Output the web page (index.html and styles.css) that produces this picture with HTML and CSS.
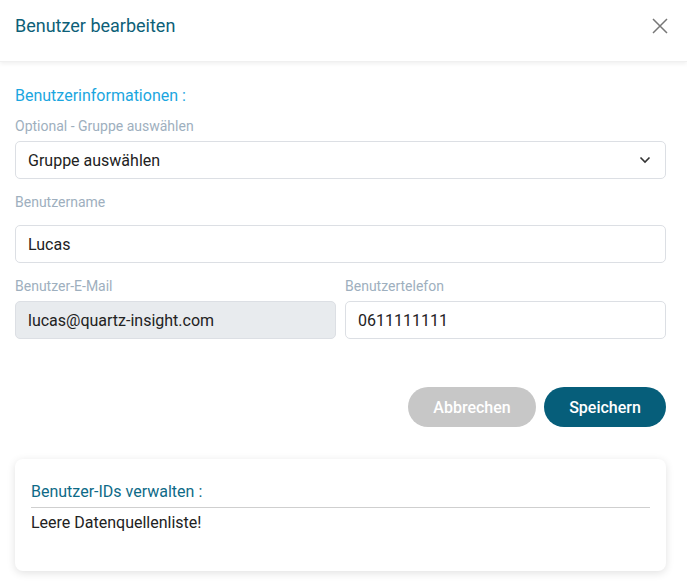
FILE: index.html
```html
<!DOCTYPE html>
<html lang="de">
<head>
<meta charset="utf-8">
<link rel="stylesheet" href="styles.css">
</head>
<body>
<div class="modal">
  <header class="modal-header">
    <h1 class="modal-title">Benutzer bearbeiten</h1>
    <button class="close" aria-label="Schließen">
      <svg width="16" height="16" viewBox="0 0 16 16"><path d="M1 1L15 15M15 1L1 15" stroke="#777" stroke-width="1.5" fill="none"/></svg>
    </button>
  </header>
  <section class="modal-body">
    <h2 class="section-title">Benutzerinformationen :</h2>
    <label class="label">Optional - Gruppe auswählen</label>
    <div class="field select">
      <span>Gruppe auswählen</span>
      <svg width="12" height="8" viewBox="0 0 12 8"><path d="M1.5 1.5L6 6L10.5 1.5" stroke="#333" stroke-width="1.6" fill="none"/></svg>
    </div>
    <label class="label label-wide">Benutzername</label>
    <div class="field">Lucas</div>
    <div class="row">
      <div class="col">
        <label class="label">Benutzer-E-Mail</label>
        <div class="field disabled">lucas@quartz-insight.com</div>
      </div>
      <div class="col">
        <label class="label">Benutzertelefon</label>
        <div class="field">0611111111</div>
      </div>
    </div>
    <div class="actions">
      <button class="btn btn-cancel">Abbrechen</button>
      <button class="btn btn-save">Speichern</button>
    </div>
    <div class="card">
      <h3 class="card-title">Benutzer-IDs verwalten :</h3>
      <p class="card-text">Leere Datenquellenliste!</p>
    </div>
  </section>
</div>
</body>
</html>
```
FILE: styles.css
```css
* { box-sizing: border-box; }
html, body { margin: 0; padding: 0; background: #fff; }
body { font-family: Roboto, "Noto Sans", Arial, sans-serif; color: #222; width: 687px; height: 588px; overflow: hidden; }
.modal { width: 687px; }
.modal-header {
  height: 62px;
  display: flex;
  align-items: center;
  justify-content: space-between;
  padding: 0 19px 10px 15px;
  box-shadow: 0 2px 4px rgba(0,0,0,0.06);
  border-bottom: 1px solid #f0f0f0;
}
.modal-title { margin: 0; font-size: 18px; font-weight: 400; color: #0d5f78; }
.close { background: none; border: 0; padding: 0; display: flex; cursor: pointer; }
.modal-body { padding: 24px 21px 0 15px; display: flex; flex-direction: column; }
.section-title { margin: 0 0 11px; font-size: 16px; font-weight: 400; color: #1ba6e0; line-height: 20px; }
.label { display: block; font-size: 14px; color: #9eafbe; line-height: 18px; margin-bottom: 6px; }
.label-wide { margin-bottom: 14px; }
.field {
  height: 38px;
  border: 1px solid #dcdfe4;
  border-radius: 5px;
  padding: 0 12px;
  display: flex;
  align-items: center;
  font-size: 16px;
  color: #222;
  margin-bottom: 14px;
}
.select { justify-content: space-between; padding-right: 14px; }
.disabled { background: #e8ebee; }
.row { display: flex; gap: 9px; }
.col { flex: 1; }
.actions { display: flex; justify-content: flex-end; gap: 8px; margin-top: 34px; }
.btn {
  height: 40px;
  border: 0;
  border-radius: 20px;
  font-family: inherit;
  font-size: 16px;
  font-weight: 500;
  color: #fff;
  padding: 0;
}
.btn-cancel { width: 128px; background: #c7c7c7; }
.btn-save { width: 122px; background: #065e7a; }
.card {
  margin-top: 32px;
  border-radius: 8px;
  box-shadow: 0 2px 8px rgba(0,0,0,0.12);
  padding: 23px 16px 38px;
}
.card-title {
  margin: 0;
  font-size: 16px;
  font-weight: 400;
  color: #0e6a87;
  padding-bottom: 5px;
  border-bottom: 1px solid #cfcfcf;
  line-height: 20px;
}
.card-text { margin: 5px 0 0; font-size: 16px; line-height: 20px; color: #222; }
```
